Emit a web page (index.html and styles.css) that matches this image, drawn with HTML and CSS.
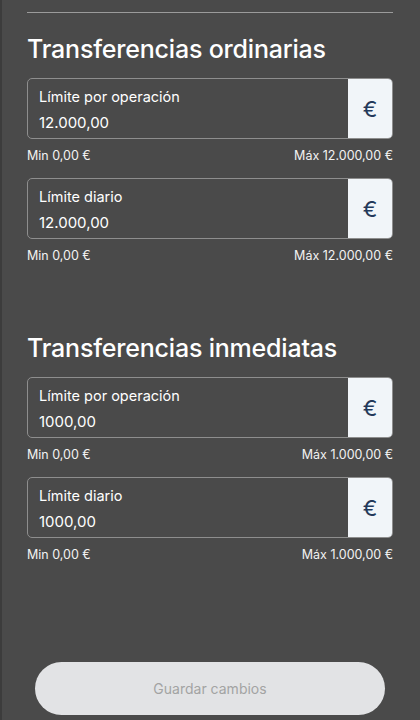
FILE: index.html
```html
<!DOCTYPE html>
<html lang="es">
  <head>
    <meta charset="UTF-8" />
    <meta name="viewport" content="width=device-width, initial-scale=1.0" />
    <title>Límites de transferencias</title>
    <link rel="stylesheet" href="styles.css">
  </head>
  <body>
    <div class="sheet">
      <hr class="divider" />

      <section class="limits">
        <h2>Transferencias ordinarias</h2>
        <div class="field">
          <div class="field-box">
            <div class="field-input">
              <label>Límite por operación</label>
              <span class="value">12.000,00</span>
            </div>
            <div class="field-addon">€</div>
          </div>
          <div class="field-hint">
            <span>Min 0,00 €</span>
            <span>Máx 12.000,00 €</span>
          </div>
        </div>
        <div class="field">
          <div class="field-box">
            <div class="field-input">
              <label>Límite diario</label>
              <span class="value">12.000,00</span>
            </div>
            <div class="field-addon">€</div>
          </div>
          <div class="field-hint">
            <span>Min 0,00 €</span>
            <span>Máx 12.000,00 €</span>
          </div>
        </div>
      </section>

      <section class="limits">
        <h2>Transferencias inmediatas</h2>
        <div class="field">
          <div class="field-box">
            <div class="field-input">
              <label>Límite por operación</label>
              <span class="value">1000,00</span>
            </div>
            <div class="field-addon">€</div>
          </div>
          <div class="field-hint">
            <span>Min 0,00 €</span>
            <span>Máx 1.000,00 €</span>
          </div>
        </div>
        <div class="field">
          <div class="field-box">
            <div class="field-input">
              <label>Límite diario</label>
              <span class="value">1000,00</span>
            </div>
            <div class="field-addon">€</div>
          </div>
          <div class="field-hint">
            <span>Min 0,00 €</span>
            <span>Máx 1.000,00 €</span>
          </div>
        </div>
      </section>

      <div class="actions">
        <button type="button" class="save" disabled>Guardar cambios</button>
      </div>
    </div>
  </body>
</html>
```

FILE: styles.css
```css
html,
body {
  margin: 0;
  height: 100%;
}

body {
  font-family: Inter, "Noto Sans", sans-serif;
  background-color: #3c3c3c;
  color: #ffffff;
  overflow: hidden;
}

.sheet {
  margin-left: 2px;
  height: 100%;
  background-color: #4a4a4a;
  padding: 0 27px 0 25px;
  display: flex;
  flex-direction: column;
}

.divider {
  border: none;
  border-top: 1px solid #9b9b9b;
  margin: 12px 0 0;
}

.limits h2 {
  font-size: 25px;
  font-weight: 500;
  letter-spacing: -0.2px;
  margin: 21px 0 14px;
}

.limits + .limits h2 {
  margin-top: 55px;
}

.field {
  margin-bottom: 15px;
}

.field-box {
  display: flex;
  height: 61px;
  border: 1px solid #8e8e8e;
  border-radius: 5px;
  box-sizing: border-box;
  overflow: hidden;
}

.field-input {
  flex: 1;
  display: flex;
  flex-direction: column;
  justify-content: center;
  gap: 8px;
  padding: 3px 11px 0;
}

.field-input label {
  font-size: 14.5px;
}

.field-input .value {
  font-size: 15px;
}

.field-addon {
  width: 44px;
  background-color: #f1f5f9;
  color: #24395a;
  font-size: 22px;
  display: flex;
  align-items: center;
  justify-content: center;
}

.field-hint {
  display: flex;
  justify-content: space-between;
  font-size: 12.5px;
  margin-top: 9px;
  color: #f2f2f2;
}

.actions {
  margin-top: auto;
  padding: 0 8px 5px;
}

.save {
  width: 100%;
  height: 53px;
  border: none;
  border-radius: 27px;
  background-color: #e2e3e5;
  color: #a3a3a3;
  font-family: inherit;
  font-size: 14px;
}
```
